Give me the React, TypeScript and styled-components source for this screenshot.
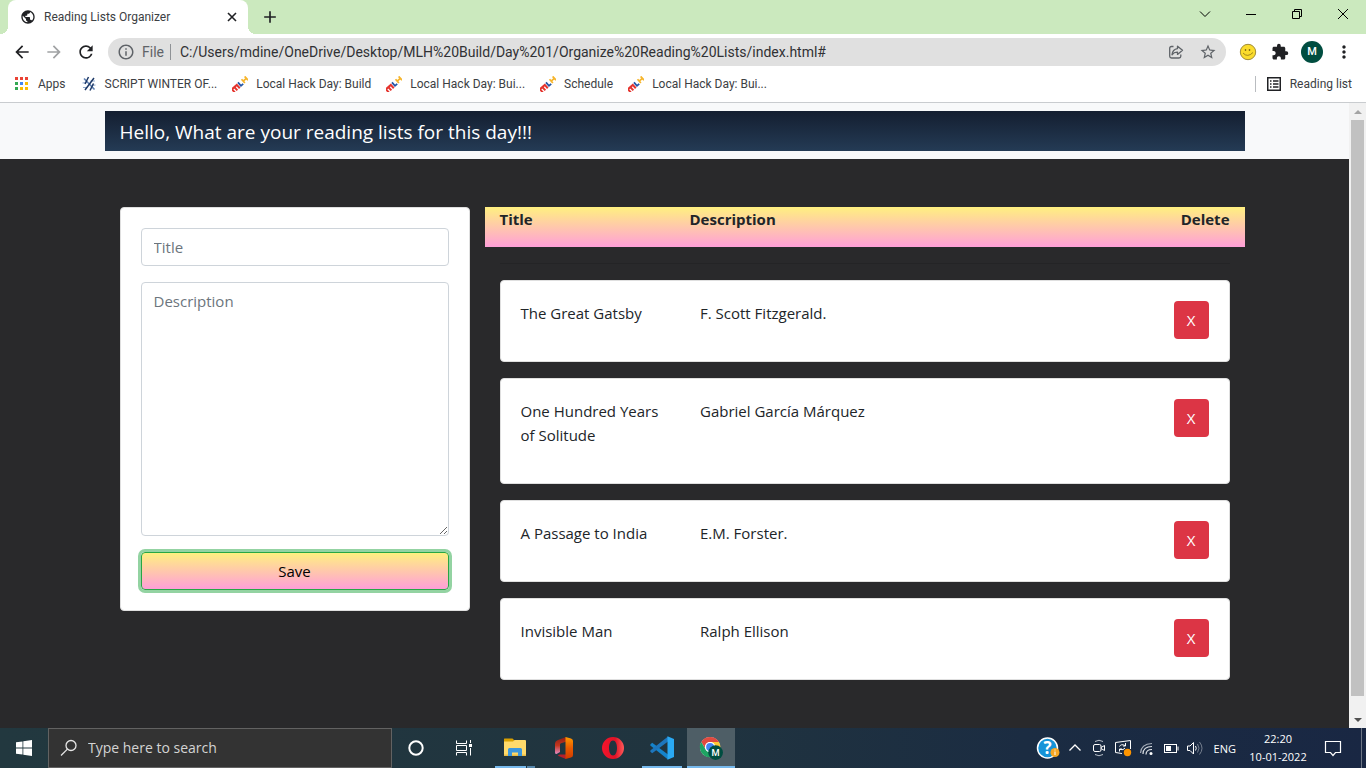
import React from 'react';
import styled, { createGlobalStyle, css } from 'styled-components';
import {
  MdArrowBack,
  MdArrowForward,
  MdRefresh,
  MdInfoOutline,
  MdStarBorder,
  MdExtension,
  MdMoreVert,
  MdPublic,
  MdAdd,
} from 'react-icons/md';

const pageFont = '"Open Sans", "Noto Sans", sans-serif';
const uiFont = 'Roboto, "Open Sans", sans-serif';
const sunset = 'linear-gradient(to bottom, #fff080, #ff9fd8)';

const GlobalStyle = createGlobalStyle`
  *, *::before, *::after { box-sizing: border-box; }
  body { margin: 0; background: #29292b; }
  button, input, textarea { font: inherit; margin: 0; }
  button { cursor: pointer; }
  svg { display: block; flex: none; }
`;

const Screen = styled.div`
  display: flex;
  flex-direction: column;
  min-height: 100vh;
  font-family: ${pageFont};
`;

/* ---------- browser frame ---------- */

const TabStrip = styled.header`
  display: flex;
  align-items: stretch;
  height: 34px;
  padding-left: 8px;
  background: #cbe9be;
  font: 12px/16px ${uiFont};
`;

const Tab = styled.div`
  position: relative;
  display: flex;
  align-items: center;
  gap: 8px;
  width: 240px;
  padding: 0 8px 0 12px;
  border-radius: 8px 8px 0 0;
  background: #fff;
  color: #3c4043;

  &::before,
  &::after {
    content: '';
    position: absolute;
    bottom: 0;
    width: 8px;
    height: 8px;
  }
  &::before {
    right: 100%;
    background: radial-gradient(circle at 0 0, transparent 8px, #fff 8px);
  }
  &::after {
    left: 100%;
    background: radial-gradient(circle at 100% 0, transparent 8px, #fff 8px);
  }
`;

const TabTitle = styled.span`
  flex: 1;
  white-space: nowrap;
`;

const IconButton = styled.button<{ $size?: number }>`
  display: flex;
  align-items: center;
  justify-content: center;
  flex: none;
  width: ${(p) => p.$size ?? 28}px;
  height: ${(p) => p.$size ?? 28}px;
  padding: 0;
  border: 0;
  border-radius: 50%;
  background: transparent;
  color: #202124;

  &:disabled {
    color: #a0a2a4;
  }
`;

const NewTab = styled(IconButton)`
  align-self: center;
  margin-left: 8px;
`;

const WindowControls = styled.div`
  display: flex;
  margin-left: auto;
`;

const WindowButton = styled.button`
  display: flex;
  align-items: center;
  justify-content: center;
  width: 46px;
  height: 28px;
  padding: 0;
  border: 0;
  background: transparent;
`;

const Toolbar = styled.nav`
  display: flex;
  align-items: center;
  gap: 4px;
  height: 36px;
  padding: 0 8px;
  background: #fff;
`;

const AddressBar = styled.div`
  display: flex;
  align-items: center;
  flex: 1;
  min-width: 0;
  height: 28px;
  margin: 0 4px;
  padding: 0 4px 0 9px;
  border-radius: 14px;
  background: #e0e0e0;
  color: #5f6368;
  font: 14px/20px ${uiFont};
`;

const Scheme = styled.span`
  margin-left: 7px;
  padding-right: 6px;
  border-right: 1px solid #8f9296;
  line-height: 16px;
`;

const AddressInput = styled.input`
  flex: 1;
  min-width: 0;
  padding: 0 8px 0 9px;
  border: 0;
  outline: 0;
  background: transparent;
  color: #303134;
`;

const AddressActions = styled.div`
  display: flex;
  gap: 4px;
  button { color: #5f6368; }
`;

const Profile = styled.span`
  display: flex;
  align-items: center;
  justify-content: center;
  width: 22px;
  height: 22px;
  border-radius: 50%;
  background: #004d40;
  color: #fff;
  font: 500 11px/22px ${uiFont};
`;

const Bookmarks = styled.nav`
  display: flex;
  align-items: center;
  gap: 15px;
  height: 33px;
  padding: 0 14px 4px;
  border-bottom: 1px solid #c9cccf;
  background: #fff;
  font: 12px/16px ${uiFont};
`;

const Bookmark = styled.a`
  display: flex;
  align-items: center;
  gap: 8px;
  color: #3c4043;
  text-decoration: none;
  white-space: nowrap;
`;

const ReadingListLink = styled(Bookmark)`
  margin-left: auto;
  padding-left: 10px;
  border-left: 1px solid #b9bcc0;
`;

/* ---------- web page ---------- */

const Viewport = styled.div`
  display: flex;
  flex: 1;
`;

const Page = styled.div`
  flex: 1;
  min-width: 0;
  background: #29292b;
  color: #212529;
  font-size: 15px;
  line-height: 24px;
`;

const Navbar = styled.div`
  padding: 8px 0;
  background: #f8f9fa;
`;

const Container = styled.div`
  max-width: 1140px;
  margin: 0 auto;
`;

const Banner = styled(Container)`
  padding: 6px 15px 4px;
  background: linear-gradient(to bottom, #141e30, #243b55);
`;

const Brand = styled.a`
  display: block;
  color: #fff;
  font-size: 19px;
  line-height: 30px;
  text-decoration: none;
`;

const Main = styled(Container)`
  display: grid;
  grid-template-columns: 1fr 2fr;
  align-items: start;
  padding: 48px 0 24px;
`;

const Form = styled.form`
  display: flex;
  flex-direction: column;
  gap: 16px;
  margin: 0 15px;
  padding: 20px;
  border: 1px solid #dfdfdf;
  border-radius: 4px;
  background: #fff;
`;

const fieldStyle = css`
  width: 100%;
  padding: 6px 12px;
  border: 1px solid #ced4da;
  border-radius: 4px;
  outline: 0;
  background: #fff;
  color: #495057;
  &::placeholder { color: #6c757d; }
`;

const TextField = styled.input`
  ${fieldStyle}
  height: 38px;
`;

const TextArea = styled.textarea`
  ${fieldStyle}
  display: block;
  height: 254px;
  resize: vertical;
`;

const SaveButton = styled.button`
  height: 38px;
  border: 1px solid #28a745;
  border-radius: 4px;
  background: ${sunset};
  box-shadow: 0 0 0 3px rgba(40, 167, 69, 0.5);
  color: #000;
`;

const BookTable = styled.table`
  display: block;

  thead, tbody { display: block; }
  thead::after {
    content: '';
    display: block;
    margin: 16px 15px;
    border-top: 1px solid #242426;
  }
  th, td { padding: 0 15px; text-align: left; }
  th:last-child, td:last-child { text-align: right; }
`;

const HeadRow = styled.tr`
  display: grid;
  grid-template-columns: 1fr 2fr 1fr;
  height: 40px;
  background: ${sunset};
`;

const BookRow = styled.tr`
  display: grid;
  grid-template-columns: 1fr 2fr 1fr;
  margin: 0 15px 16px;
  padding: 20px 5px;
  border: 1px solid #dfdfdf;
  border-radius: 4px;
  background: #fff;

  td:not(:last-child) { padding-bottom: 16px; }
`;

const DeleteButton = styled.button`
  width: 35px;
  height: 38px;
  padding: 0;
  border: 0;
  border-radius: 4px;
  background: #dc3545;
  color: #fff;
`;

const Scrollbar = styled.div`
  display: flex;
  flex-direction: column;
  align-items: center;
  width: 17px;
  background: #f1f1f1;
`;

const ScrollArrow = styled.div`
  display: flex;
  align-items: center;
  justify-content: center;
  width: 17px;
  height: 17px;
`;

const Thumb = styled.div`
  flex: 39;
  width: 13px;
  background: #c1c1c1;
`;

const TrackRest = styled.div`
  flex: 1;
`;

/* ---------- taskbar ---------- */

const Taskbar = styled.footer`
  display: flex;
  align-items: stretch;
  height: 40px;
  padding-right: 4px;
  background: linear-gradient(to right, #22383f, #20343f 50%, #1b2c42 75%, #192743);
  color: #fff;
`;

const TaskButton = styled.button`
  display: flex;
  align-items: center;
  justify-content: center;
  width: 48px;
  padding: 0;
  border: 0;
  background: transparent;
`;

const SearchBox = styled.label`
  display: flex;
  align-items: center;
  gap: 10px;
  width: 344px;
  padding: 0 11px;
  border: 1px solid #626262;
  background: #333;
`;

const SearchInput = styled.input`
  flex: 1;
  min-width: 0;
  padding: 0;
  border: 0;
  outline: 0;
  background: transparent;
  color: #fff;
  font-size: 14px;
  line-height: 20px;
  &::placeholder { color: #d4d4d4; opacity: 1; }
`;

const PinnedApps = styled.div`
  display: flex;
  gap: 1px;
  margin-left: 3px;
`;

const AppButton = styled(TaskButton)<{ $state?: 'open' | 'stacked' | 'active' }>`
  position: relative;
  background: ${(p) => (p.$state === 'active' ? '#4e5e66' : 'transparent')};

  &::after {
    content: '';
    position: absolute;
    bottom: 0;
    left: ${(p) => (p.$state === 'active' ? 0 : 4)}px;
    right: ${(p) => (p.$state === 'active' ? 0 : 4)}px;
    height: 2px;
    background: ${(p) =>
      !p.$state
        ? 'none'
        : p.$state === 'stacked'
          ? 'linear-gradient(to right, #76b9ed 31px, #20343f 31px, #20343f 32px, #5687ac 32px)'
          : '#76b9ed'};
  }
`;

const Tray = styled.div`
  display: flex;
  align-items: stretch;
  margin-left: auto;
  padding-right: 4px;
  border-right: 1px solid #6d7685;
`;

const TrayButton = styled(TaskButton)`
  width: 24px;
`;

const HelpButton = styled(TrayButton)`
  margin-right: 3px;
`;

const Language = styled.button`
  padding: 0 11px 0 7px;
  border: 0;
  background: transparent;
  color: #fff;
  font-size: 11px;
`;

const Clock = styled.time`
  display: flex;
  flex-direction: column;
  justify-content: center;
  width: 62px;
  font-size: 11px;
  line-height: 18px;
  text-align: center;
`;

/* ---------- drawings ---------- */

const CloseIcon = () => (
  <svg width="10" height="10" viewBox="0 0 10 10" stroke="#202124" strokeWidth="1.600">
    <path d="M1 1L9 9M9 1L1 9" />
  </svg>
);

const AppsIcon = () => (
  <svg width="16" height="16" viewBox="0 0 16 16" shapeRendering="crispEdges">
    {['#ea4335', '#ea4335', '#ea4335', '#34a853', '#4285f4', '#fbbc04', '#34a853', '#fbbc04', '#fbbc04'].map((c, i) => (
      <rect key={i} x={1 + (i % 3) * 5} y={1 + Math.floor(i / 3) * 5} width="3" height="3" fill={c} />
    ))}
  </svg>
);

const ScriptIcon = () => (
  <svg width="16" height="16" viewBox="0 0 16 16" fill="none">
    <path d="M3 2.500L13.500 13.500" stroke="#5f80b3" strokeWidth="1.600" />
    <path d="M1.500 7L6 6.500M10 9.500L14.500 9M9.500 5H14M2 11.500H6" stroke="#8fa9cd" strokeWidth="1.200" />
    <path d="M7.500 1L4 8M13 2L4 14M12.500 7.500L9 14.500" stroke="#1f3a68" strokeWidth="1.500" />
  </svg>
);

const MlhIcon = () => (
  <svg width="16" height="16" viewBox="0 0 16 16" aria-hidden="true">
    <g transform="rotate(-42 8 8)" fill="none" strokeWidth="1.800">
      <path d="M-1.500 11V6.500H5V11M1.750 6.500V11" stroke="#e5342e" strokeWidth="2" />
      <path d="M7.500 5.500V10H10.500" stroke="#2456a6" />
      <path d="M12.300 5.500V10.500M16.500 5.500V10.500M12.300 8H16.500" stroke="#f6b52c" />
    </g>
  </svg>
);

const ReadingListIcon = () => (
  <svg width="16" height="16" viewBox="0 0 16 16" fill="none" stroke="#202124">
    <path d="M1.750 1.750H14.250V14.250H1.750Z" strokeWidth="1.500" />
    <path d="M4 5H5.500M4 8H5.500M4 11H5.500M7 5H12.500M7 8H12.500M7 11H12.500" strokeWidth="1.500" />
  </svg>
);

const ShareIcon = () => (
  <svg width="16" height="16" viewBox="0 0 16 16" fill="none" stroke="currentColor" strokeWidth="1.300" strokeLinejoin="round">
    <path d="M5.500 2.500H3.500Q1.700 2.500 1.700 4.300V12.200Q1.700 14 3.500 14H11Q12.800 14 12.800 12.200V10.500" />
    <path d="M9.500 2.200L14.500 6.300L9.500 10.400V8.200Q6 8 4 10.800Q4.600 5.200 9.500 4.600Z" />
  </svg>
);

const SmileyIcon = () => (
  <svg width="18" height="18" viewBox="0 0 18 18">
    <circle cx="9" cy="9" r="7.700" fill="#fbdc2c" stroke="#a08c38" />
    <circle cx="6.500" cy="7" r="0.800" fill="#4b3d08" />
    <circle cx="10.500" cy="7" r="0.800" fill="#4b3d08" />
    <path d="M4 10Q8.500 15 14 9.500" fill="none" stroke="#8a7216" strokeWidth="0.800" />
  </svg>
);

const WindowsIcon = () => (
  <svg width="16" height="16" viewBox="0 0 16 16" fill="#fff">
    <path d="M0 2.300L6.500 1.400V7.600H0ZM7.300 1.300L16 0V7.600H7.300ZM0 8.400H6.500V14.600L0 13.700ZM7.300 8.400H16V16L7.300 14.700Z" />
  </svg>
);

const SearchIcon = () => (
  <svg width="18" height="18" viewBox="0 0 18 18" fill="none" stroke="#e6e6e6" strokeWidth="1.300">
    <circle cx="11" cy="6.500" r="5" />
    <path d="M7.400 10.100L1 16.500" />
  </svg>
);

const CortanaIcon = () => (
  <svg width="16" height="16" viewBox="0 0 16 16">
    <circle cx="8" cy="8" r="6.700" fill="none" stroke="#fff" strokeWidth="2" />
  </svg>
);

const TaskViewIcon = () => (
  <svg width="18" height="18" viewBox="0 0 18 18" fill="none" stroke="#fff">
    <path d="M1.500 1.500V4.500H11.500V1.500M1.500 16.500V13.500H11.500V16.500M1.500 6.500H11.500V11.500H1.500ZM15.500 1V4M15.500 9V16.500" />
    <path d="M14 6.500h3" strokeWidth="3" />
  </svg>
);

const FolderIcon = () => (
  <svg width="22" height="20" viewBox="0 0 22 20">
    <path d="M0 1Q0 0.500 0.500 0.500H8.500L10 2V4H0Z" fill="#d9a000" />
    <path d="M0 3.500H9L10.500 2H21Q22 2 22 3V17.500H0Z" fill="#ffda6b" />
    <path d="M0 16.500H22V18H0Z" fill="#eabd45" />
    <path d="M4 18V11.500Q4 10 5.500 10H16.500Q18 10 18 11.500V18H14V14.500H8V18Z" fill="#3c97dd" />
  </svg>
);

const OfficeIcon = () => (
  <svg width="20" height="24" viewBox="0 0 20 24">
    <defs>
      <linearGradient id="office-left" x1="0" y1="0" x2="0" y2="1">
        <stop offset="0" stopColor="#8f1d14" />
        <stop offset=".5" stopColor="#c3371f" />
        <stop offset="1" stopColor="#e58ac4" />
      </linearGradient>
      <linearGradient id="office-right" x1="0" y1="0" x2="0" y2="1">
        <stop offset="0" stopColor="#ff9a00" />
        <stop offset=".5" stopColor="#e85a00" />
        <stop offset="1" stopColor="#d13a00" />
      </linearGradient>
    </defs>
    <path d="M12 1L4 4Q1 5.200 1 8V16.500Q1 18 2.500 18L6 16V8.500Q6 7.500 7 7.200L12 5.800Z" fill="url(#office-left)" />
    <path d="M6 18.500L12 18.500V23L4.500 20Q3 19 6 18.500Z" fill="#b5202a" />
    <path d="M11.500 1L17 2.600Q19 3.200 19 5V19Q19 21 17 21.500L11.500 23Z" fill="url(#office-right)" />
  </svg>
);

const OperaIcon = () => (
  <svg width="22" height="22" viewBox="0 0 22 22">
    <defs>
      <linearGradient id="opera" x1="0" y1="0" x2="1" y2="0">
        <stop offset="0" stopColor="#f5142c" />
        <stop offset=".6" stopColor="#e01226" />
        <stop offset="1" stopColor="#ff5a5a" />
      </linearGradient>
    </defs>
    <path fill="url(#opera)" fillRule="evenodd" d="M11 0A11 11 0 1 0 11 22A11 11 0 1 0 11 0ZM11 3.500C13.500 3.500 15 6.800 15 11S13.500 18.500 11 18.500S7 15.200 7 11S8.500 3.500 11 3.500Z" />
  </svg>
);

const VsCodeIcon = () => (
  <svg width="24" height="24" viewBox="0 0 24 24">
    <path d="M0.500 8.200L2.200 6.700L18 18.500V23.500L0.600 9.700Q0 9 0.500 8.200Z" fill="#1583cb" />
    <path d="M0.500 15.800L2.200 17.300L18 5.500V0.500L0.600 14.300Q0 15 0.500 15.800Z" fill="#1d76bd" />
    <path d="M17.500 0.300L24 3V21L17.500 23.700Z" fill="#2aa9f3" />
  </svg>
);

const ChromeIcon = () => (
  <svg width="24" height="24" viewBox="0 0 26 26">
    <circle cx="12" cy="12" r="11" fill="#fff" />
    <path d="M2.470 6.500A11 11 0 0 1 21.530 6.500H12A5.500 5.500 0 0 0 7.240 14.750Z" fill="#e04a3f" />
    <path d="M21.530 6.500A11 11 0 0 1 12 23L16.760 14.750A5.500 5.500 0 0 0 12 6.500Z" fill="#fcc934" />
    <path d="M12 23A11 11 0 0 1 2.470 6.500L7.240 14.750A5.500 5.500 0 0 0 16.760 14.750Z" fill="#1ea362" />
    <circle cx="12" cy="12" r="5.500" fill="#fff" />
    <circle cx="12" cy="12" r="4.300" fill="#4285f4" />
    <circle cx="18" cy="18" r="8" fill="#004d40" />
    <text x="18" y="21.500" textAnchor="middle" fill="#fff" fontSize="10" fontWeight="500" fontFamily="Roboto, sans-serif">M</text>
  </svg>
);

const HelpIcon = () => (
  <svg width="24" height="24" viewBox="0 0 24 24">
    <circle cx="11.500" cy="12" r="10" fill="#1593d8" stroke="#fff" strokeWidth="1.500" />
    <text x="11.500" y="18" textAnchor="middle" fill="#fff" fontSize="17" fontWeight="700" fontFamily="Open Sans, sans-serif">?</text>
    <circle cx="19" cy="16.500" r="4.500" fill="#f5a623" />
    <path d="M19 15.500V19M19 13.500V14.500" stroke="#fff" />
  </svg>
);

const line = { fill: 'none', stroke: '#fff', strokeWidth: 1 };

const ChevronUpIcon = () => (
  <svg width="14" height="14" viewBox="0 0 14 14" {...line} strokeWidth="1.300"><path d="M1.500 9.500L7 4L12.500 9.500" /></svg>
);
const MeetIcon = () => (
  <svg width="16" height="18" viewBox="0 0 16 18" {...line}>
    <path d="M4 2.500Q8 0 12 2.500M4 15.500Q8 18 12 15.500" stroke="#b9c0ca" />
    <rect x="2.500" y="5.500" width="7.500" height="7" rx="1.500" />
    <path d="M10 8.500L13.500 6.500V11.500L10 9.500" />
  </svg>
);
const SyncIcon = () => (
  <svg width="18" height="18" viewBox="0 0 18 18" {...line}>
    <path d="M8 14.500L1.500 13.500V3.500L16.500 1.500V10" />
    <path d="M5.500 7.500Q7 4.500 11 6.500M11.500 4V7H9M11 9Q9.500 11.500 6 10.500M5.500 12.500V10H8" />
    <circle cx="13.500" cy="13.500" r="3.700" fill="#ff9500" stroke="none" />
  </svg>
);
const WifiIcon = () => (
  <svg width="16" height="16" viewBox="0 0 16 16" {...line}>
    <path d="M4 14Q4 6.500 13 6.500M7 14.500Q7 9.500 13 9.500" stroke="#dfe3e8" strokeWidth="1.200" />
    <path d="M1.500 13Q2 4 13 3.500" stroke="#a3abb7" strokeWidth="1.200" />
    <circle cx="12" cy="13.500" r="1.500" fill="#fff" stroke="none" />
  </svg>
);
const BatteryIcon = () => (
  <svg width="16" height="16" viewBox="0 0 16 16" {...line}>
    <rect x="1.500" y="4.500" width="12" height="8" />
    <rect x="3" y="6" width="5" height="5" fill="#fff" stroke="none" />
    <path d="M15 6.500V10.500" />
  </svg>
);
const SpeakerIcon = () => (
  <svg width="16" height="16" viewBox="0 0 16 16" {...line}>
    <path d="M0.500 6V10.500H3L6.500 14V2.500L3 6ZM8.500 6Q10 8.200 8.500 10.500" />
    <path d="M10.500 4Q13.500 8.200 10.500 12.500M12.500 2Q17.500 8.200 12.500 14.500" stroke="#77808f" />
  </svg>
);
const NotificationIcon = () => (
  <svg width="18" height="18" viewBox="0 0 18 18" {...line} strokeWidth="1.200">
    <path d="M1.500 2.500H16.500V13.500H11.500L9 16.500L6.500 13.500H1.500Z" />
  </svg>
);

/* ---------- content ---------- */

const bookmarks = [
  { label: 'Apps', icon: <AppsIcon /> },
  { label: 'SCRIPT WINTER OF...', icon: <ScriptIcon /> },
  { label: 'Local Hack Day: Build', icon: <MlhIcon /> },
  { label: 'Local Hack Day: Bui...', icon: <MlhIcon /> },
  { label: 'Schedule', icon: <MlhIcon /> },
  { label: 'Local Hack Day: Bui...', icon: <MlhIcon /> },
];

const books = [
  { title: 'The Great Gatsby', description: 'F. Scott Fitzgerald.' },
  { title: 'One Hundred Years of Solitude', description: 'Gabriel García Márquez' },
  { title: 'A Passage to India', description: 'E.M. Forster.' },
  { title: 'Invisible Man', description: 'Ralph Ellison' },
];

const address =
  'C:/Users/mdine/OneDrive/Desktop/MLH%20Build/Day%201/Organize%20Reading%20Lists/index.html#';

function BrowserFrame() {
  return (
    <>
      <TabStrip>
        <Tab>
          <MdPublic size={16} color="#202124" />
          <TabTitle>Reading Lists Organizer</TabTitle>
          <IconButton $size={16} aria-label="Close tab"><CloseIcon /></IconButton>
        </Tab>
        <NewTab aria-label="New tab"><MdAdd size={20} /></NewTab>
        <WindowControls>
          <WindowButton aria-label="Search tabs">
            <svg width="12" height="12" viewBox="0 0 12 12" fill="none" stroke="#000"><path d="M1 3.500L6 8.500L11 3.500" /></svg>
          </WindowButton>
          <WindowButton aria-label="Minimize">
            <svg width="12" height="12" viewBox="0 0 12 12" stroke="#000"><path d="M1 6.500H11" /></svg>
          </WindowButton>
          <WindowButton aria-label="Restore">
            <svg width="12" height="12" viewBox="0 0 12 12" fill="none" stroke="#000"><path d="M1.500 3.500H8.500V10.500H1.500ZM3.500 3.500V1.500H10.500V8.500H8.500" /></svg>
          </WindowButton>
          <WindowButton aria-label="Close">
            <svg width="12" height="12" viewBox="0 0 12 12" stroke="#000"><path d="M1 1L11 11M11 1L1 11" /></svg>
          </WindowButton>
        </WindowControls>
      </TabStrip>
      <Toolbar aria-label="Browser toolbar">
        <IconButton aria-label="Back"><MdArrowBack size={20} /></IconButton>
        <IconButton aria-label="Forward" disabled><MdArrowForward size={20} /></IconButton>
        <IconButton aria-label="Reload"><MdRefresh size={20} /></IconButton>
        <AddressBar>
          <MdInfoOutline size={18} />
          <Scheme>File</Scheme>
          <AddressInput aria-label="Address" defaultValue={address} spellCheck={false} />
          <AddressActions>
            <IconButton aria-label="Share"><ShareIcon /></IconButton>
            <IconButton aria-label="Bookmark this page"><MdStarBorder size={18} /></IconButton>
          </AddressActions>
        </AddressBar>
        <IconButton aria-label="Smiley extension"><SmileyIcon /></IconButton>
        <IconButton aria-label="Extensions"><MdExtension size={18} /></IconButton>
        <IconButton aria-label="Profile"><Profile>M</Profile></IconButton>
        <IconButton aria-label="Menu"><MdMoreVert size={20} /></IconButton>
      </Toolbar>
      <Bookmarks aria-label="Bookmarks">
        {bookmarks.map((b, i) => (
          <Bookmark href="#" key={i}>{b.icon}{b.label}</Bookmark>
        ))}
        <ReadingListLink href="#"><ReadingListIcon />Reading list</ReadingListLink>
      </Bookmarks>
    </>
  );
}

function ReadingListPage() {
  return (
    <Page>
      <Navbar>
        <Banner><Brand href="#">Hello, What are your reading lists for this day!!!</Brand></Banner>
      </Navbar>
      <Main as="main">
        <Form onSubmit={(e) => e.preventDefault()}>
          <TextField aria-label="Title" placeholder="Title" />
          <TextArea aria-label="Description" placeholder="Description" />
          <SaveButton type="submit">Save</SaveButton>
        </Form>
        <BookTable>
          <thead>
            <HeadRow><th>Title</th><th>Description</th><th>Delete</th></HeadRow>
          </thead>
          <tbody>
            {books.map((b) => (
              <BookRow key={b.title}>
                <td>{b.title}</td>
                <td>{b.description}</td>
                <td><DeleteButton aria-label={`Delete ${b.title}`}>X</DeleteButton></td>
              </BookRow>
            ))}
          </tbody>
        </BookTable>
      </Main>
    </Page>
  );
}

function WindowsTaskbar() {
  return (
    <Taskbar>
      <TaskButton aria-label="Start"><WindowsIcon /></TaskButton>
      <SearchBox>
        <SearchIcon />
        <SearchInput aria-label="Search" placeholder="Type here to search" />
      </SearchBox>
      <TaskButton aria-label="Cortana"><CortanaIcon /></TaskButton>
      <TaskButton aria-label="Task view"><TaskViewIcon /></TaskButton>
      <PinnedApps>
        <AppButton $state="stacked" aria-label="File Explorer"><FolderIcon /></AppButton>
        <AppButton aria-label="Office"><OfficeIcon /></AppButton>
        <AppButton aria-label="Opera"><OperaIcon /></AppButton>
        <AppButton $state="open" aria-label="Visual Studio Code"><VsCodeIcon /></AppButton>
        <AppButton $state="active" aria-label="Chrome"><ChromeIcon /></AppButton>
      </PinnedApps>
      <Tray>
        <HelpButton aria-label="Help"><HelpIcon /></HelpButton>
        <TrayButton aria-label="Show hidden icons"><ChevronUpIcon /></TrayButton>
        <TrayButton aria-label="Meet now"><MeetIcon /></TrayButton>
        <TrayButton aria-label="Sync"><SyncIcon /></TrayButton>
        <TrayButton aria-label="Wi-Fi"><WifiIcon /></TrayButton>
        <TrayButton aria-label="Battery"><BatteryIcon /></TrayButton>
        <TrayButton aria-label="Volume"><SpeakerIcon /></TrayButton>
        <Language>ENG</Language>
        <Clock dateTime="2022-01-10T22:20"><span>22:20</span><span>10-01-2022</span></Clock>
        <TaskButton aria-label="Notifications"><NotificationIcon /></TaskButton>
      </Tray>
    </Taskbar>
  );
}

export default function App() {
  return (
    <Screen>
      <GlobalStyle />
      <BrowserFrame />
      <Viewport>
        <ReadingListPage />
        <Scrollbar aria-hidden="true">
          <ScrollArrow><svg width="8" height="4" viewBox="0 0 8 4"><path d="M0 4L4 0L8 4Z" fill="#a3a3a3" /></svg></ScrollArrow>
          <Thumb />
          <TrackRest />
          <ScrollArrow><svg width="8" height="4" viewBox="0 0 8 4"><path d="M0 0L4 4L8 0Z" fill="#505050" /></svg></ScrollArrow>
        </Scrollbar>
      </Viewport>
      <WindowsTaskbar />
    </Screen>
  );
}
